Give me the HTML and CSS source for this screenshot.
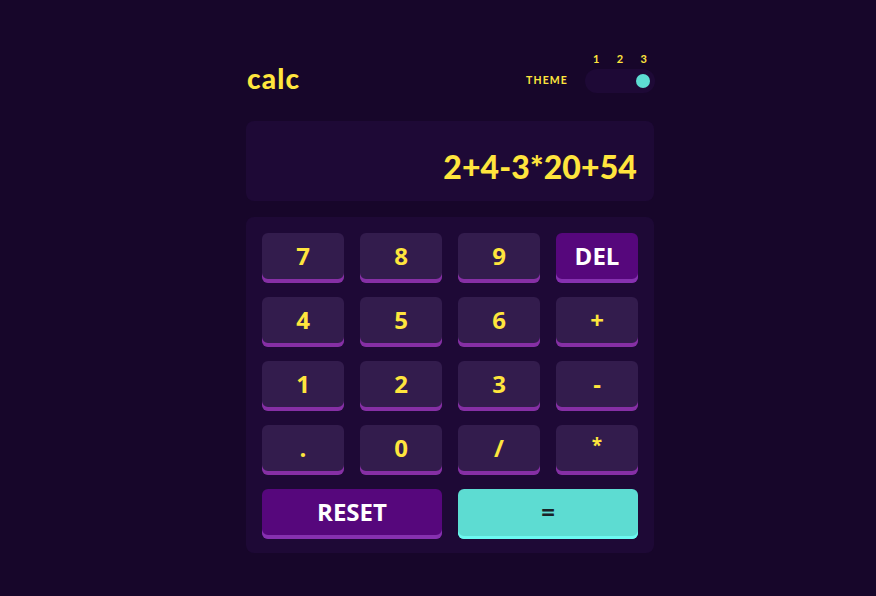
FILE: index.html
```html
<!DOCTYPE html>
<html>
<head>
<meta charset="utf-8">
<link rel="stylesheet" href="styles.css">
</head>
<body>
<main class="calc">
  <header class="top">
    <h1 class="logo">calc</h1>
    <div class="theme">
      <span class="theme-label">THEME</span>
      <div class="switch">
        <div class="nums"><span>1</span><span>2</span><span>3</span></div>
        <div class="track"><span class="knob"></span></div>
      </div>
    </div>
  </header>
  <section class="screen">2+4-3*20+54</section>
  <section class="keypad">
    <button class="key">7</button>
    <button class="key">8</button>
    <button class="key">9</button>
    <button class="key key-del">DEL</button>
    <button class="key">4</button>
    <button class="key">5</button>
    <button class="key">6</button>
    <button class="key">+</button>
    <button class="key">1</button>
    <button class="key">2</button>
    <button class="key">3</button>
    <button class="key">-</button>
    <button class="key">.</button>
    <button class="key">0</button>
    <button class="key">/</button>
    <button class="key key-small">*</button>
    <button class="key key-del key-wide">RESET</button>
    <button class="key key-eq key-wide">=</button>
  </section>
</main>
</body>
</html>
```
FILE: styles.css
```css
* { box-sizing: border-box; }
html, body { margin: 0; padding: 0; }
body {
  background: #17062a;
  width: 876px;
  height: 596px;
  font-family: "Open Sans", "Lato", sans-serif;
  color: #ffe53d;
}
.calc {
  width: 408px;
  margin-left: 246px;
  padding-top: 53px;
}
.top {
  display: flex;
  justify-content: space-between;
  align-items: flex-end;
  height: 40px;
}
.logo {
  margin: 0 0 1px 1px;
  font-family: "Lato", sans-serif;
  font-weight: 900;
  font-size: 28px;
  line-height: 27px;
  letter-spacing: 1.2px;
  color: #ffe53d;
}
.theme {
  display: flex;
  align-items: flex-end;
  gap: 17px;
}
.theme-label {
  font-family: "Lato", sans-serif;
  font-weight: 700;
  font-size: 10.5px;
  letter-spacing: 1.1px;
  line-height: 12px;
  margin-bottom: 7px;
}
.switch {
  display: flex;
  flex-direction: column;
  width: 70px;
  margin-right: -1px;
}
.nums {
  display: flex;
  justify-content: space-between;
  padding: 0 8px 0 8px;
  font-family: "Lato", sans-serif;
  font-weight: 700;
  font-size: 11px;
  line-height: 12px;
  margin-bottom: 4px;
}
.track {
  height: 24px;
  background: #1e0936;
  border-radius: 12px;
  display: flex;
  align-items: center;
  justify-content: flex-end;
  padding-right: 5px;
}
.knob {
  width: 14px;
  height: 14px;
  border-radius: 50%;
  background: #5ddcd2;
}
.screen {
  margin-top: 28px;
  height: 80px;
  background: #1e0936;
  border-radius: 8px;
  display: flex;
  align-items: center;
  justify-content: flex-end;
  padding: 10px 17px 0 0;
  font-family: "Lato", sans-serif;
  font-weight: 900;
  font-size: 32px;
  letter-spacing: 0.1px;
}
.keypad {
  margin-top: 16px;
  background: #1e0936;
  border-radius: 8px;
  padding: 16px 16px 14px;
  display: grid;
  grid-template-columns: repeat(4, 1fr);
  column-gap: 16px;
  row-gap: 14px;
}
.key {
  height: 50px;
  border: none;
  border-radius: 6px;
  background: #331c4d;
  box-shadow: inset 0 -4px 0 #862fa5;
  color: #ffe53d;
  font-family: "Open Sans", sans-serif;
  font-weight: 700;
  font-size: 24px;
  padding: 0 0 4px;
  line-height: 1;
}
.key-small { font-size: 19px; padding-bottom: 10px; }
.key-del {
  background: #56077c;
  box-shadow: inset 0 -4px 0 #8631b0;
  color: #ffffff;
}
.key-wide { grid-column: span 2; }
.key-eq {
  background: #5ddcd2;
  box-shadow: inset 0 -3px 0 #6cf9f1;
  color: #1a2327;
}
```
